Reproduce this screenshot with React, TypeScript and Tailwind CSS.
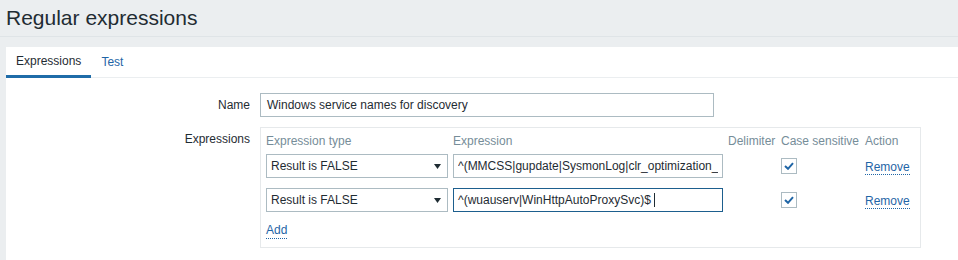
import React from 'react';

const rows = [
  { type: 'Result is FALSE', expr: '^(MMCSS|gupdate|SysmonLog|clr_optimization_v2.0.50727_32|clr_optimization_v4.0.30319_32)$', focused: false },
  { type: 'Result is FALSE', expr: '^(wuauserv|WinHttpAutoProxySvc)$ ', focused: true },
];

function Checkbox() {
  return (
    <div className="w-[16px] h-[16px] border border-[#acbbc2] bg-white flex items-center justify-center">
      <svg width="10" height="8" viewBox="0 0 10 8">
        <path d="M1 4 L4 6.8 L9 1.2" fill="none" stroke="#1f65a6" strokeWidth="2" />
      </svg>
    </div>
  );
}

function Select({ value }: { value: string }) {
  return (
    <div className="w-[182px] h-[24px] border border-[#acbbc2] flex items-center justify-between pl-[4px] pr-[6px] bg-white">
      <span>{value}</span>
      <svg width="7" height="5" viewBox="0 0 7 5">
        <path d="M0 0 H7 L3.5 5 Z" fill="#1f2c33" />
      </svg>
    </div>
  );
}

export default function App() {
  return (
    <div className="min-h-screen bg-[#ebeef0] font-['Liberation_Sans',Arial,sans-serif] text-[12px] leading-[14px] text-[#1f2c33]">
      <header className="h-[37px] border-b border-[#dfe4e7] px-[6px] pt-[6px]">
        <h1 className="text-[21px] leading-[24px]">Regular expressions</h1>
      </header>
      <div className="pl-[6px] pt-[10px]">
        <div className="bg-white h-[213px]">
          <div className="flex h-[31px] border-b border-[#ebeef0]">
            <div className="h-[31px] -mb-px px-[10px] flex items-center border-b-[3px] border-[#1f6ca8]">Expressions</div>
            <div className="h-[30px] px-[10px] flex items-center text-[#1f65a6]">Test</div>
          </div>

          <div className="pt-[15px]">
            <div className="flex items-center">
              <div className="w-[244px] text-right">Name</div>
              <div className="ml-[10px] w-[454px] h-[24px] border border-[#acbbc2] flex items-center px-[6px]">
                Windows service names for discovery
              </div>
            </div>

            <div className="flex items-start mt-[10px]">
              <div className="w-[244px] text-right pt-[5px]">Expressions</div>
              <div className="ml-[10px] w-[661px] border border-[#e6e9eb] px-[5px] pb-[8px]">
                <div className="flex h-[26px] pt-[6px] text-[#768d99]">
                  <div className="w-[182px]">Expression type</div>
                  <div className="ml-[5px] w-[270px]">Expression</div>
                  <div className="ml-[5px] w-[53px]">Delimiter</div>
                  <div className="w-[84px]">Case sensitive</div>
                  <div>Action</div>
                </div>

                <div className="flex flex-col gap-[10px]">
                  {rows.map((row, i) => (
                    <div key={i} className="flex items-center h-[24px]">
                      <Select value={row.type} />
                      {row.focused ? (
                        <div className="ml-[5px] w-[270px] h-[24px] border border-[#1d5f8e] flex items-center pl-[4px] whitespace-pre">
                          <span>{row.expr}</span>
                          <span className="w-px h-[14px] bg-[#1f2c33]" />
                        </div>
                      ) : (
                        <input
                          readOnly
                          value={row.expr}
                          className="ml-[5px] w-[270px] h-[24px] border border-[#acbbc2] pl-[4px] pr-[4px] outline-none text-[#1f2c33]"
                        />
                      )}
                      <div className="ml-[5px] w-[53px]" />
                      <div className="w-[84px]">
                        <Checkbox />
                      </div>
                      <span className="mt-[3px] text-[#1f65a6] border-b border-dotted border-[#1f65a6] leading-[14px]">Remove</span>
                    </div>
                  ))}
                </div>

                <div className="mt-[11px]">
                  <span className="inline-block text-[#1f65a6] border-b border-dotted border-[#1f65a6] pb-[1px]">Add</span>
                </div>
              </div>
            </div>
          </div>
        </div>
      </div>
    </div>
  );
}
